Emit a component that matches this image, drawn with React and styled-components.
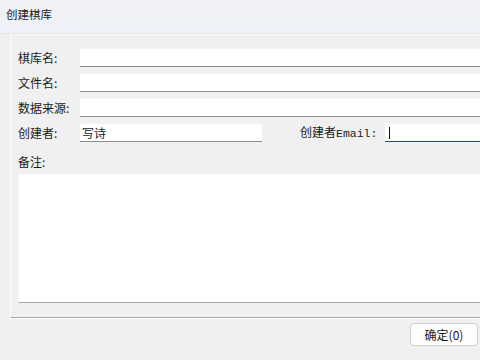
import React from "react";
import styled, { createGlobalStyle } from "styled-components";

const Global = createGlobalStyle`
  html, body { margin: 0; padding: 0; background: #f0f0f0; }
  body { width: 480px; height: 360px; overflow: hidden; }
  * { box-sizing: border-box; }
`;

const Window = styled.div`
  width: 480px;
  height: 360px;
  overflow: hidden;
  background: #f0f0f0;
  font-family: "Noto Sans CJK SC", "Microsoft YaHei", sans-serif;
  font-size: 12px;
  color: #1a1a1a;
  display: flex;
  flex-direction: column;
`;

const TitleBar = styled.div`
  height: 34px;
  flex: none;
  background: linear-gradient(#f0f1f4, #eef1f7);
  border-bottom: 1px solid #e6e6e6;
  display: flex;
  align-items: flex-start;
  padding: 6px 0 0 6px;
  font-size: 11.5px;
  color: #222;
`;

const Body = styled.div`
  flex: 1;
  padding: 0 0 0 10px;
  display: flex;
  flex-direction: column;
`;

const GroupBox = styled.div`
  margin-right: -30px;
  height: 284px;
  border-left: 1px solid #fbfbfb;
  border-top: 1px solid #f8f8f8;
  border-bottom: 1px solid #a9a9a9;
  box-shadow: 0 1px 0 #ffffff;
  padding: 13px 0 0 7px;
  display: flex;
  flex-direction: column;
  gap: 6px;
`;

const Row = styled.div`
  display: flex;
  align-items: center;
  height: 19px;
`;

const Label = styled.label`
  width: ${(p) => p.$w || 62}px;
  flex: none;
  margin-left: ${(p) => p.$ml || 0}px;
  white-space: nowrap;
  line-height: 19px;
`;

const Latin = styled.span`
  font-family: "Liberation Mono", "DejaVu Sans Mono", monospace;
  font-size: 11.5px;
`;

const Field = styled.div`
  height: 19px;
  width: ${(p) => (p.$w ? `${p.$w}px` : "auto")};
  flex: ${(p) => (p.$w ? "none" : "1")};
  background: #fff;
  border-top: 1px solid #f4f4f4;
  border-bottom: 1px solid ${(p) => (p.$focus ? "#1f4f6a" : "#8d8d8d")};
  padding: 0 0 0 2px;
  line-height: 18px;
  position: relative;
`;

const Caret = styled.span`
  position: absolute;
  left: 4px;
  top: 3px;
  width: 1px;
  height: 12px;
  background: #111;
`;

const NoteLabel = styled.div`
  margin-top: 7px;
  line-height: 13px;
`;

const TextArea = styled.div`
  height: 129px;
  background: #fff;
  border-left: 1px solid #f6f6f6;
  border-bottom: 1px solid #a6a6a6;
`;

const Footer = styled.div`
  display: flex;
  justify-content: flex-end;
  padding: 5px 2px 0 0;
`;

const Button = styled.button`
  width: 68px;
  height: 23px;
  background: #fdfdfd;
  border: 1px solid #d0d0d0;
  border-radius: 4px;
  font-family: "Noto Sans CJK SC", sans-serif;
  font-size: 12px;
  color: #1a1a1a;
  padding: 0;
  line-height: 20px;
`;

export default function App() {
  return (
    <Window>
      <Global />
      <TitleBar>创建棋库</TitleBar>
      <Body>
        <GroupBox>
          <Row>
            <Label>棋库名:</Label>
            <Field />
          </Row>
          <Row>
            <Label>文件名:</Label>
            <Field />
          </Row>
          <Row>
            <Label>数据来源:</Label>
            <Field />
          </Row>
          <Row>
            <Label>创建者:</Label>
            <Field $w={182}>写诗</Field>
            <Label $ml={38} $w={85}>
              创建者<Latin>Email:</Latin>
            </Label>
            <Field $focus>
              <Caret />
            </Field>
          </Row>
          <NoteLabel>备注:</NoteLabel>
          <TextArea />
        </GroupBox>
        <Footer>
          <Button>确定(0)</Button>
        </Footer>
      </Body>
    </Window>
  );
}
